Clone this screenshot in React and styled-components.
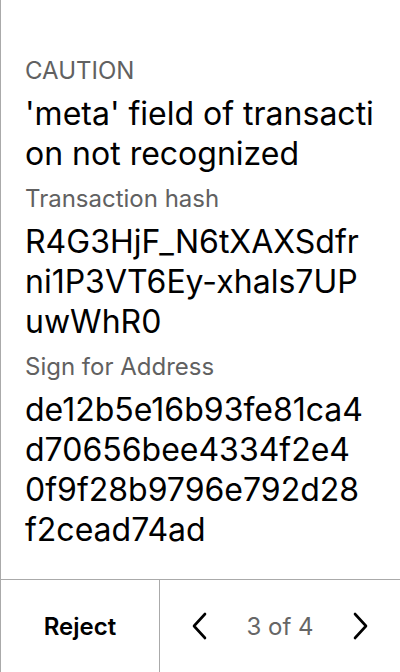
import React from "react";
import styled, { createGlobalStyle } from "styled-components";

const GlobalStyle = createGlobalStyle`
  html, body {
    margin: 0;
    padding: 0;
    background: #ffffff;
  }
  body {
    font-family: Inter, "Noto Sans", sans-serif;
  }
`;

const Screen = styled.div`
  width: 400px;
  height: 672px;
  box-sizing: border-box;
  border-left: 1px solid #aaaaaa;
  display: flex;
  flex-direction: column;
  background: #fff;
`;

const Body = styled.div`
  flex: 1;
  padding: 56px 25px 0 24px;
  display: flex;
  flex-direction: column;
`;

const Label = styled.div`
  font-size: 24px;
  line-height: 30px;
  color: #616161;
  margin-bottom: 8px;
`;

const Value = styled.div`
  font-size: 32px;
  line-height: 40px;
  color: #000;
  word-break: break-all;
  margin-bottom: 10px;
`;

const Chunk = styled.span`
  display: block;
`;

const Footer = styled.div`
  height: 92px;
  border-top: 1px solid #aaaaaa;
  display: grid;
  grid-template-columns: 159px 1fr;
`;

const RejectButton = styled.button`
  border: none;
  border-right: 1px solid #aaaaaa;
  background: transparent;
  font-family: inherit;
  font-size: 24px;
  font-weight: 600;
  color: #000;
  cursor: pointer;
`;

const Pager = styled.div`
  display: flex;
  align-items: center;
  justify-content: space-between;
  padding: 0 27px;
`;

const Arrow = styled.button`
  border: none;
  background: transparent;
  padding: 0;
  width: 24px;
  height: 30px;
  display: flex;
  align-items: center;
  justify-content: center;
  cursor: pointer;
`;

const Count = styled.span`
  font-size: 24px;
  color: #666;
`;

const Chevron = ({ dir }) => (
  <svg width="16" height="28" viewBox="0 0 16 28" fill="none">
    <path
      d={dir === "left" ? "M14 2 L3 14 L14 26" : "M2 2 L13 14 L2 26"}
      stroke="#000"
      strokeWidth="2.6"
      strokeLinecap="round"
      strokeLinejoin="round"
    />
  </svg>
);

const address = "de12b5e16b93fe81ca4d70656bee4334f2e40f9f28b9796e792d28f2cead74ad";

// the device wraps the address every few characters; keep the same breaks
const addressLines = [
  address.slice(0, 19),
  address.slice(19, 36),
  address.slice(36, 54),
  address.slice(54),
];

export default function App() {
  return (
    <>
      <GlobalStyle />
      <Screen>
        <Body>
          <Label>CAUTION</Label>
          <Value>'meta' field of transaction not recognized</Value>
          <Label>Transaction hash</Label>
          <Value>R4G3HjF_N6tXAXSdfrni1P3VT6Ey-xhals7UPuwWhR0</Value>
          <Label>Sign for Address</Label>
          <Value>
            {addressLines.map((line) => (
              <Chunk key={line}>{line}</Chunk>
            ))}
          </Value>
        </Body>
        <Footer>
          <RejectButton>Reject</RejectButton>
          <Pager>
            <Arrow aria-label="Previous">
              <Chevron dir="left" />
            </Arrow>
            <Count>3 of 4</Count>
            <Arrow aria-label="Next">
              <Chevron dir="right" />
            </Arrow>
          </Pager>
        </Footer>
      </Screen>
    </>
  );
}
